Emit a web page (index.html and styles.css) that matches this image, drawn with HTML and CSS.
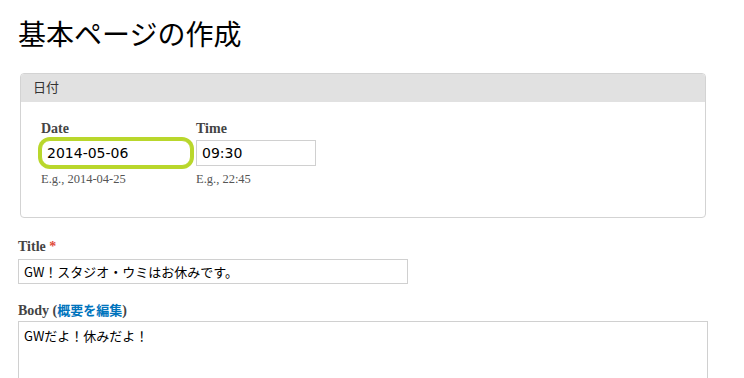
FILE: index.html
```html
<!DOCTYPE html>
<html lang="ja">
<head>
    <meta charset="UTF-8">
    <meta name="viewport" content="width=device-width, initial-scale=1.0">
    <title>基本ページの作成</title>
    <link rel="stylesheet" href="styles.css">
</head>
<body>
    <div class="page">
        <h1 class="page-title">基本ページの作成</h1>

        <div class="fieldset">
            <div class="fieldset-legend">日付</div>
            <div class="fieldset-body">
                <div class="field">
                    <label class="field-label" for="date">Date</label>
                    <input id="date" class="text-input date-input is-focused" type="text" value="2014-05-06">
                    <div class="field-desc">E.g., 2014-04-25</div>
                </div>
                <div class="field">
                    <label class="field-label" for="time">Time</label>
                    <input id="time" class="text-input time-input" type="text" value="09:30">
                    <div class="field-desc">E.g., 22:45</div>
                </div>
            </div>
        </div>

        <div class="form-item">
            <label class="field-label" for="title">Title <span class="required">*</span></label>
            <input id="title" class="text-input title-input" type="text" value="GW！スタジオ・ウミはお休みです。">
        </div>

        <div class="form-item body-item">
            <label class="field-label" for="body">Body (<a class="link" href="#">概要を編集</a>)</label>
            <textarea id="body" class="text-area">GWだよ！休みだよ！</textarea>
        </div>
    </div>
</body>
</html>
```

FILE: styles.css
```css
body {
    margin: 0;
    padding: 0;
    background-color: #fff;
    color: #333;
    font-family: "Liberation Serif", "Noto Sans CJK JP", serif;
}

.page {
    padding: 16px 0 0 18px;
}

.page-title {
    margin: 0;
    font-size: 28px;
    line-height: 40px;
    font-weight: normal;
    color: #000;
    font-family: "Liberation Serif", "Noto Sans CJK JP", serif;
}

.fieldset {
    margin: 17px 0 0 2px;
    width: 684px;
    border: 1px solid #d3d3d3;
    border-radius: 4px;
    overflow: hidden;
}

.fieldset-legend {
    height: 28px;
    line-height: 28px;
    padding-left: 12px;
    background-color: #e1e1e1;
    font-family: "DejaVu Sans", "Noto Sans CJK JP", sans-serif;
    font-size: 13px;
    color: #333;
}

.fieldset-body {
    display: flex;
    gap: 5px;
    padding: 19px 20px 30px 20px;
}

.field {
    display: flex;
    flex-direction: column;
}

.field-label {
    display: block;
    font-family: "Liberation Serif", "Noto Sans CJK JP", serif;
    font-size: 14px;
    font-weight: bold;
    line-height: 16px;
    color: #444;
    margin-bottom: 3px;
}

.text-input {
    box-sizing: border-box;
    height: 26px;
    margin: 0;
    padding: 0 5px;
    border: 1px solid #d0d0d0;
    border-radius: 0;
    font-family: "DejaVu Sans", "Noto Sans CJK JP", sans-serif;
    font-size: 14px;
    color: #000;
    background-color: #fff;
    outline: none;
}

.date-input {
    width: 150px;
}

.time-input {
    width: 120px;
}

.is-focused {
    border-radius: 9px;
    border-color: #b9d72c;
    box-shadow: 0 0 0 3px #b9d72c;
}

.field-desc {
    margin-top: 5px;
    font-size: 12.5px;
    line-height: 16px;
    color: #555;
}

.form-item {
    margin-top: 21px;
}

.form-item .field-label {
    margin-bottom: 4px;
}

.title-input {
    width: 390px;
    height: 25px;
    font-family: "Noto Sans CJK JP", sans-serif;
    font-size: 13px;
}

.required {
    color: #e04a3a;
}

.link {
    color: #0074bd;
    text-decoration: none;
    font-family: "Noto Sans CJK JP", sans-serif;
    font-size: 13px;
}

.body-item {
    margin-top: 18px;
}

.body-item .field-label {
    margin-bottom: 2px;
}

.text-area {
    display: block;
    box-sizing: border-box;
    width: 690px;
    height: 120px;
    margin: 0;
    padding: 4px 5px;
    border: 1px solid #d0d0d0;
    resize: none;
    font-family: "Noto Sans CJK JP", sans-serif;
    font-size: 13px;
    line-height: 20px;
    color: #000;
}
```
